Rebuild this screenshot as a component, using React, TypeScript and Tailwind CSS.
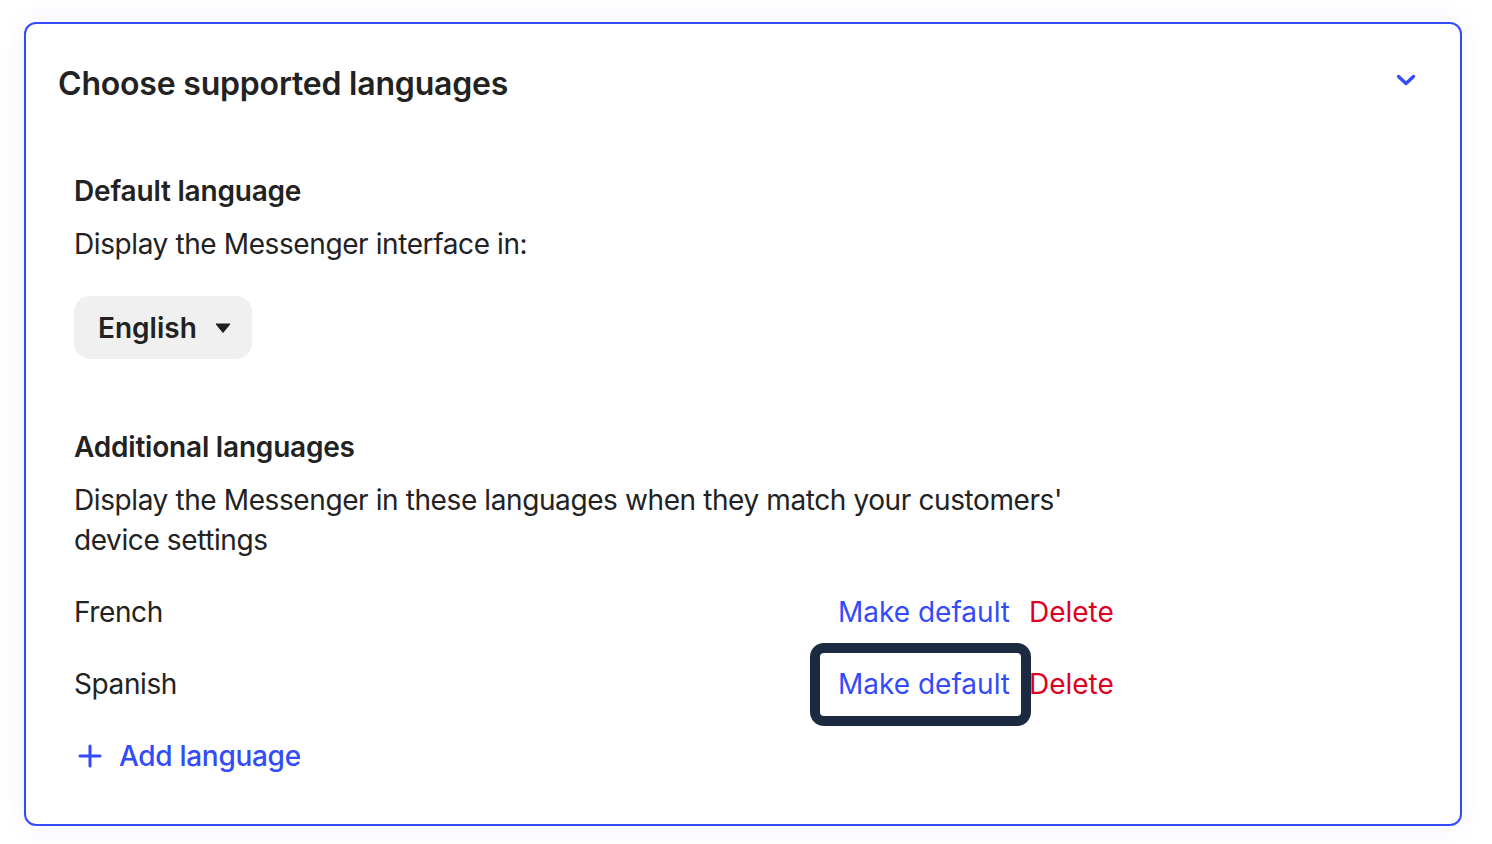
import { useState } from "react";

type Lang = {
  name: string;
};

const FONT = { fontFamily: "Inter, 'Noto Sans', sans-serif" };

const ChevronDown = () => (
  <svg width="20" height="12" viewBox="0 0 20 12" fill="none">
    <path d="M2.5 2.5L10 9.5L17.5 2.5" stroke="#334bfa" strokeWidth="3.4" strokeLinecap="round" strokeLinejoin="round" />
  </svg>
);

const Caret = () => (
  <svg width="16" height="10" viewBox="0 0 16 10">
    <path d="M1 1h14L8 9.5z" fill="#1f1f1f" stroke="#1f1f1f" strokeWidth="1" strokeLinejoin="round" />
  </svg>
);

const Plus = () => (
  <svg width="24" height="24" viewBox="0 0 24 24" fill="none">
    <path d="M12 2v20M2 12h20" stroke="#334bfa" strokeWidth="3" strokeLinecap="round" />
  </svg>
);

const App = () => {
  const [langs] = useState<Lang[]>([{ name: "French" }, { name: "Spanish" }]);

  return (
    <div className="min-h-screen bg-white pt-[22px] pl-[24px] pr-[30px] pb-[18px] text-[#222222]" style={FONT}>
      <div className="h-[804px] rounded-[12px] border-2 border-[#334bfa] bg-white shadow-[0_0_24px_rgba(51,75,250,0.07)]">
        {/* Header */}
        <div className="flex items-center justify-between pl-[32px] pr-[42px] pt-[40px]">
          <h2 className="text-[32px] leading-[40px] font-semibold tracking-[-0.2px]">Choose supported languages</h2>
          <button className="flex h-[24px] w-[24px] items-center justify-center -mt-[8px]">
            <ChevronDown />
          </button>
        </div>

        {/* Body */}
        <div className="pl-[48px] pt-[67px]">
          <h3 className="text-[28px] leading-[40px] font-semibold tracking-[-0.2px]">Default language</h3>
          <p className="mt-[13px] text-[28px] leading-[40px] tracking-[-0.4px]">Display the Messenger interface in:</p>
          <button className="mt-[32px] flex h-[63px] items-center gap-[18px] rounded-[16px] bg-[#f0f0f0] pl-[24px] pr-[21px]">
            <span className="text-[28px] leading-[40px] font-semibold">English</span>
            <Caret />
          </button>

          <h3 className="mt-[68px] text-[28px] leading-[40px] font-semibold tracking-[-0.2px]">Additional languages</h3>
          <p className="mt-[13px] w-[1040px] text-[28px] leading-[40px] tracking-[-0.4px]">
            Display the Messenger in these languages when they match your customers' device settings
          </p>

          <div className="mt-[16px] flex flex-col">
            {langs.map((lang, index) => (
              <div key={lang.name} className="flex h-[72px] items-center">
                <span className="w-[746px] text-[28px] leading-[40px] tracking-[-0.4px]">{lang.name}</span>
                <button
                  className={
                    index === 1
                      ? "flex h-[63px] items-center rounded-[4px] pl-[18px] pr-[11px] text-[28px] text-[#334bfa] outline-[10px] outline-solid outline-[#1c2a41]"
                      : "flex h-[63px] items-center pl-[18px] pr-[11px] text-[28px] text-[#334bfa]"
                  }
                >
                  Make default
                </button>
                <button className="ml-[8px] text-[28px] leading-[40px] text-[#dd0021]">Delete</button>
              </div>
            ))}
            <button className="flex h-[72px] items-center gap-[17px] pl-[4px]">
              <Plus />
              <span className="text-[28px] leading-[40px] font-medium tracking-[-0.3px] text-[#334bfa]">Add language</span>
            </button>
          </div>
        </div>
      </div>
    </div>
  );
};

export default App;
